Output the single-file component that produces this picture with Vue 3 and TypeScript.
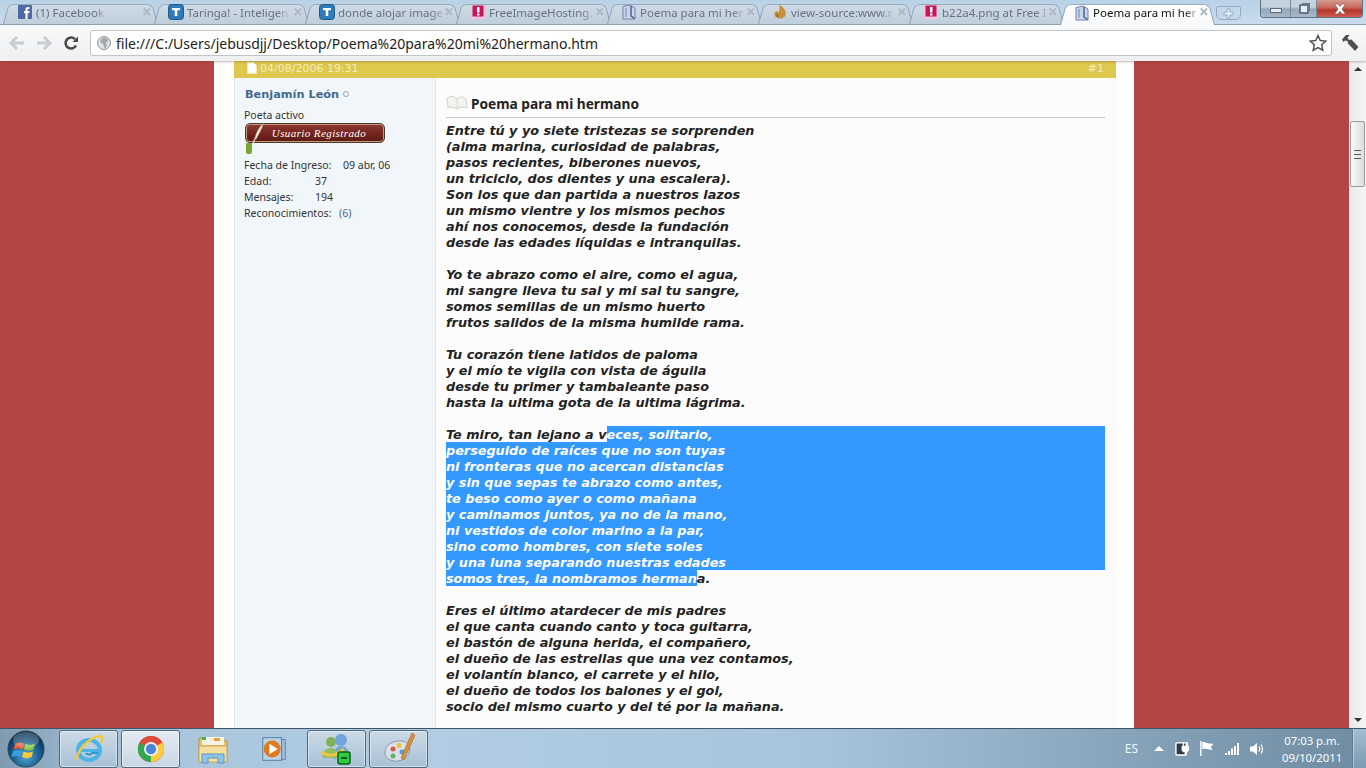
<template>
  <div class="screen">
    <!-- barra de pestañas y de direcciones -->
    <header class="chrome">
      <div class="tabstrip">
        <div
          v-for="tab in tabs"
          :key="tab.id"
          class="tab"
          :class="{ active: tab.active }"
        >
          <svg class="favicon" viewBox="0 0 16 16" width="16" height="16">
            <template v-if="tab.icon === 'fb'">
              <rect x="1" y="1" width="14" height="14" rx="1" fill="#4c69a5" />
              <path d="M8.5 15V9.2H7V7h1.5V5.500C8.5 3.800 9.5 3 11 3h1.500v2.100h-1c-.7 0-.9.3-.9.9V7h1.900l-.3 2.200h-1.600V15z" fill="#fff" />
            </template>
            <template v-else-if="tab.icon === 't'">
              <rect x="0.5" y="0.5" width="15" height="15" rx="3" fill="#2f7ab8" stroke="#1f5a8e" />
              <path d="M4 4h8v2.300H9.300V12H6.700V6.300H4z" fill="#fff" />
            </template>
            <template v-else-if="tab.icon === 'fih'">
              <rect x="1" y="1" width="14" height="14" fill="#f4c3dc" />
              <rect x="2.5" y="1.5" width="11" height="11" fill="#c2185b" />
              <rect x="7" y="3" width="2.5" height="5.5" fill="#fff" />
              <rect x="7" y="9.5" width="2.5" height="2" fill="#fff" />
            </template>
            <template v-else-if="tab.icon === 'doc'">
              <path d="M2 2.5 9 1l5 3v11H2z" fill="#c9d6ea" stroke="#6f83ad" />
              <path d="M10 2v10l3.5 2.500" fill="none" stroke="#3d5486" stroke-width="1.3" />
              <path d="M5 4v9" stroke="#8ea2c8" stroke-width="1.5" />
            </template>
            <template v-else>
              <path d="M7 1c5 2 7.500 6 6.500 10-.8 3-4.500 4.500-8 3C3 13 1.500 10 3 8c1-1.200 3-1 3.500.5C7.500 6 8 4 7 1z" fill="#c8903a" />
              <path d="M4.5 10c1 .2 1.500 1.500 1 3" stroke="#6a4a1c" fill="none" />
            </template>
          </svg>
          <span class="tab-title">{{ tab.title }}</span>
          <span class="tab-close">×</span>
        </div>
        <div class="newtab">
          <svg viewBox="0 0 12 12" width="11" height="11">
            <path d="M4.5 1h3v3.500H11v3H7.500V11h-3V7.500H1v-3h3.500z" fill="#e8f0f8" stroke="#8fa6bc" />
          </svg>
        </div>
        <div class="wincontrols">
          <div class="wc wc-min"><span class="min-glyph"></span></div>
          <div class="wc wc-max"><span class="max-glyph"></span></div>
          <div class="wc wc-close">
            <svg viewBox="0 0 14 12" width="14" height="12">
              <path d="M1.5 1H5l2 2.500L9 1h3.500L9 6l3.500 5H9L7 8.500 5 11H1.500L5 6z" fill="#fff" stroke="#7d2a22" stroke-width="0.5" />
            </svg>
          </div>
        </div>
      </div>
      <div class="toolbar">
        <svg class="nav nav-back" viewBox="0 0 18 16" width="18" height="16">
          <path d="M9 2 3 8l6 6M3.500 8H16" fill="none" stroke="#c9cdd1" stroke-width="3" />
        </svg>
        <svg class="nav nav-forward" viewBox="0 0 18 16" width="18" height="16">
          <path d="m9 2 6 6-6 6M14.500 8H2" fill="none" stroke="#c9cdd1" stroke-width="3" />
        </svg>
        <svg class="nav nav-reload" viewBox="0 0 16 16" width="16" height="16">
          <path d="M13 10.500A5.500 5.500 0 1 1 12 4.200" fill="none" stroke="#4a4a4a" stroke-width="2.6" />
          <path d="M9.5 7H15V1.500z" fill="#4a4a4a" />
        </svg>
        <div class="omnibox">
          <svg viewBox="0 0 16 16" width="16" height="16">
            <circle cx="8" cy="8" r="6.5" fill="#dfe2e6" stroke="#8f959b" />
            <path d="M8 2.500c2 1 3.500.5 4.500 2.500L10 8l1 3-2.500 2.500L7 9 4 7l1-3z" fill="#a3a9af" />
          </svg>
          <span class="url">file:///C:/Users/jebusdjj/Desktop/Poema%20para%20mi%20hermano.htm</span>
          <svg class="star" viewBox="0 0 18 18" width="18" height="18">
            <path d="m9 1.500 2.300 5 5.400.6-4 3.700 1.100 5.400L9 13.500l-4.800 2.700 1.100-5.400-4-3.700 5.400-.6z" fill="#fff" stroke="#555" stroke-width="1.5" />
          </svg>
        </div>
        <svg class="wrench" viewBox="0 0 18 18" width="18" height="18">
          <path d="M1 5.500 5 1h3.500L6.500 4l1.500 2 2.500-.5L17.500 13l-3.500 4-7-7.500-.5-2.500-2.500-.5L2.500 8z" fill="#4e4e4e" />
        </svg>
      </div>
    </header>

    <!-- página -->
    <main class="page">
      <div class="viewport">
        <div class="wrap">
          <article class="post">
            <div class="post-head">
              <span class="date">
                <svg viewBox="0 0 10 12" width="10" height="12">
                  <path d="M.5.5h6l3 3v8H.5z" fill="#fff" stroke="#f3e9b0" stroke-width="0.6" />
                </svg>
                04/08/2006 19:31
              </span>
              <span class="postnum">#1</span>
            </div>
            <div class="post-body">
              <aside class="user">
                <div class="username">Benjamín León <span class="status"></span></div>
                <div class="usertitle">Poeta activo</div>
                <div class="rank">
                  <svg class="quill" viewBox="0 0 14 22" width="14" height="22">
                    <path d="M12.5.5C9 3 5.500 8 3.500 16L5 16.500C8 11 11 6 12.500.5z" fill="#f4ecd8" stroke="#8a7d68" stroke-width="0.5" />
                    <path d="M3.5 16 2 21.500" stroke="#e9dfc8" stroke-width="1.2" />
                  </svg>
                  <span class="rank-label">Usuario Registrado</span>
                </div>
                <div class="repbar"></div>
                <dl class="stats">
                  <div v-for="stat in stats" :key="stat.label" class="stat">
                    <dt :style="{ width: stat.valueAt + 'px' }">{{ stat.label }}</dt>
                    <dd :class="{ link: stat.link }">{{ stat.value }}</dd>
                  </div>
                </dl>
              </aside>
              <section class="message">
                <h2 class="msg-title">
                  <svg viewBox="0 0 22 16" width="22" height="16">
                    <path d="M1 3c4-2 7-2 10 1 3-2.500 6-3 9 0v.5l1 8.500c-4-1.500-7-1-10 1-3-1.500-6-2.500-9-1.500z" fill="#f3f3ef" stroke="#c9c9c2" stroke-width="0.8" />
                    <path d="M11 4l.5 9.500" stroke="#c9c9c2" stroke-width="0.7" />
                  </svg>
                  Poema para mi hermano
                </h2>
                <div class="poem">
                  <div v-for="(line, i) in poemBefore" :key="'a' + i" class="line">{{ line }}</div>
                  <div class="line sel-first"><span>Te miro, tan lejano a v</span><span class="sel sel-rest">eces, solitario,</span></div>
                  <div v-for="line in poemSelected" :key="line" class="line sel">{{ line }}</div>
                  <div class="line"><span class="sel">somos tres, la nombramos herman</span>a.</div>
                  <div v-for="(line, i) in poemAfter" :key="'b' + i" class="line">{{ line }}</div>
                </div>
              </section>
            </div>
          </article>
        </div>
      </div>
      <div class="scrollbar">
        <span class="arrow-up"></span>
        <div class="thumb"><span class="grip"></span></div>
        <span class="arrow-down"></span>
      </div>
    </main>

    <!-- barra de tareas de Windows 7 -->
    <footer class="taskbar">
      <svg class="orb" viewBox="0 0 40 40" width="40" height="40">
        <defs>
          <radialGradient id="orbFill" cx="50%" cy="70%" r="65%">
            <stop offset="0" stop-color="#4fa8d8" />
            <stop offset="0.7" stop-color="#12507e" />
            <stop offset="1" stop-color="#0b2c48" />
          </radialGradient>
        </defs>
        <circle cx="20" cy="20" r="18" fill="url(#orbFill)" stroke="#2d4658" />
        <path d="M9 15c3-2 6-2 9-.5l-1.500 6c-3-1.500-6-1.500-9 0z" fill="#e8602c" />
        <path d="M19.5 14.800c3 1.500 6 1.500 9.500-.3l-1.500 6c-3 1.500-6 1.500-9.500 0z" fill="#8cc63f" />
        <path d="M7 22c3-1.500 6-1.500 9 0l-1.500 6c-3-1.500-6-1.500-9 0z" fill="#3d9be0" />
        <path d="M17.5 22.500c3 1.500 6 1.500 9.500 0L25.500 28c-3 1.500-6 1.500-9.500 0z" fill="#fdc92f" />
        <ellipse cx="20" cy="11" rx="13" ry="8" fill="#fff" opacity="0.22" />
      </svg>
      <div class="tb-btn">
        <svg viewBox="0 0 32 32" width="32" height="32">
          <ellipse cx="16" cy="17" rx="11" ry="10" fill="none" stroke="#4ab4e6" stroke-width="4" />
          <path d="M7 16h18v3H7z" fill="#4ab4e6" />
          <path d="M25 20h-6c-1 2-5 2-6 0" fill="none" stroke="#2f9ad0" stroke-width="2" />
          <path d="M3 27C5 17 15 5 27 3c3 0 3 3 1 7" fill="none" stroke="#f5c83a" stroke-width="2.5" />
        </svg>
      </div>
      <div class="tb-btn tb-active">
        <svg viewBox="0 0 32 32" width="30" height="30">
          <circle cx="16" cy="16" r="14" fill="#dd4b39" />
          <path d="M16 16 28.100 9A14 14 0 0 1 16 30z" fill="#ffcd40" />
          <path d="M16 16 16 30A14 14 0 0 1 3.900 9z" fill="#2fa84f" />
          <path d="M16 2A14 14 0 0 1 28.100 9H16L8 12 3.900 9A14 14 0 0 1 16 2z" fill="#dd4b39" />
          <circle cx="16" cy="16" r="6.5" fill="#4a86d8" stroke="#f2f2f2" stroke-width="2" />
        </svg>
      </div>
      <div class="tb-btn tb-plain">
        <svg viewBox="0 0 34 34" width="34" height="34">
          <path d="M3 6h16l2 3h10v20H3z" fill="#e9c46a" stroke="#b8924a" />
          <rect x="6" y="5" width="22" height="8" fill="#f7f3e2" />
          <rect x="6" y="5" width="4" height="3" fill="#4caf50" />
          <rect x="18" y="6" width="6" height="3" fill="#d9a441" />
          <path d="M3 14h28v16H3z" fill="#f6df9e" stroke="#c9a45a" />
          <path d="M6 22h22v9h-6v-5H12v5H6z" fill="#8cc4ea" stroke="#5e93bb" />
        </svg>
      </div>
      <div class="tb-btn tb-plain">
        <svg viewBox="0 0 34 34" width="32" height="32">
          <rect x="8" y="7" width="20" height="21" fill="#9dbcd6" stroke="#5f87aa" />
          <rect x="4" y="5" width="20" height="24" fill="#b9d2e6" stroke="#4f7ca3" />
          <circle cx="14" cy="17" r="9" fill="#e07a1f" />
          <path d="M11 11.500 20 17l-9 5.500z" fill="#fff" />
        </svg>
      </div>
      <div class="tb-btn">
        <svg viewBox="0 0 34 34" width="34" height="34">
          <circle cx="11" cy="10" r="5" fill="#7fb25a" />
          <circle cx="21" cy="8" r="6" fill="#6ea6dc" />
          <path d="M14 28c-1-9 2-14 7-14s8 4 8 9v3H16z" fill="#6ea6dc" />
          <path d="M3 26c-1-6 2-10 8-10s7 5 7 10z" fill="#8fbe68" />
          <path d="M2 20C8 25 16 24 24 17" fill="none" stroke="#f0c53c" stroke-width="3" />
          <rect x="18" y="20" width="12" height="12" rx="2" fill="#2ecc40" stroke="#0d5f18" stroke-width="1.5" />
          <rect x="21" y="25" width="6" height="2" fill="#0d5f18" />
        </svg>
      </div>
      <div class="tb-btn">
        <svg viewBox="0 0 34 34" width="34" height="34">
          <path d="M3 20C3 13 11 8 20 9c7 1 9 6 7 12-2 5-8 9-15 8-6-1-9-4-9-9z" fill="#d9e0ea" stroke="#8796ab" />
          <circle cx="11" cy="17" r="2.5" fill="#d9584a" />
          <circle cx="17" cy="13.500" r="2.5" fill="#e9c23e" />
          <circle cx="20" cy="20" r="2.5" fill="#5c9ad4" />
          <circle cx="11" cy="24" r="2.5" fill="#62b06a" />
          <path d="M30 1 19 26l3 2L33 3z" fill="#d9903a" stroke="#a0641f" stroke-width="0.6" />
        </svg>
      </div>
      <div class="tray">
        <span class="lang">ES</span>
        <span class="tray-arrow"></span>
        <svg viewBox="0 0 16 18" width="15" height="17">
          <rect x="1" y="3" width="11" height="13" rx="1" fill="#2b3b47" stroke="#fff" stroke-width="1.5" />
          <path d="M7 6h8v5l-2 2H9l-2-2z" fill="#fff" />
          <path d="M9 2v4M13 2v4M11 13v3" stroke="#fff" stroke-width="1.5" />
        </svg>
        <svg viewBox="0 0 16 18" width="16" height="17">
          <path d="M1.5 1v16" stroke="#fff" stroke-width="1.5" />
          <path d="M3 2c4 0 5 2 12 2l-3 3.500 2 3C9 10 7 8.500 3 9.500z" fill="#fff" />
        </svg>
        <svg viewBox="0 0 16 14" width="16" height="14">
          <path d="M1 11h2v2H1zM4 9h2v4H4zM7 6.500h2V13H7zM10 4h2v9h-2zM13 1h2v12h-2z" fill="#fff" />
        </svg>
        <svg viewBox="0 0 16 16" width="16" height="16">
          <path d="M1 5.500h3L8 2v12L4 10.500H1z" fill="#fff" />
          <path d="M10 5.500c1 1.500 1 3.500 0 5M12 3.500c2 2.500 2 6.500 0 9" fill="none" stroke="#fff" stroke-width="1.2" />
        </svg>
        <div class="clock">
          <div>07:03 p.m.</div>
          <div>09/10/2011</div>
        </div>
      </div>
      <div class="showdesk"></div>
    </footer>
  </div>
</template>

<script setup lang="ts">
interface Tab {
  id: number
  title: string
  icon: 'fb' | 't' | 'fih' | 'doc' | 'src'
  active?: boolean
}

interface Stat {
  label: string
  value: string
  valueAt: number
  link?: boolean
}

// títulos tal como se leen en la pestaña
const tabs: Tab[] = [
  { id: 1, title: '(1) Facebook', icon: 'fb' },
  { id: 2, title: 'Taringa! - Inteligen', icon: 't' },
  { id: 3, title: 'donde alojar image', icon: 't' },
  { id: 4, title: 'FreeImageHosting.', icon: 'fih' },
  { id: 5, title: 'Poema para mi her', icon: 'doc' },
  { id: 6, title: 'view-source:www.r', icon: 'src' },
  { id: 7, title: 'b22a4.png at Free I', icon: 'fih' },
  { id: 8, title: 'Poema para mi her', icon: 'doc', active: true }
]

// valueAt: distancia desde el borde izquierdo hasta el valor
const stats: Stat[] = [
  { label: 'Fecha de Ingreso:', value: '09 abr, 06', valueAt: 99 },
  { label: 'Edad:', value: '37', valueAt: 71 },
  { label: 'Mensajes:', value: '194', valueAt: 71 },
  { label: 'Reconocimientos:', value: '(6)', valueAt: 95, link: true }
]

const poemBefore: string[] = [
  'Entre tú y yo siete tristezas se sorprenden',
  '(alma marina, curiosidad de palabras,',
  'pasos recientes, biberones nuevos,',
  'un triciclo, dos dientes y una escalera).',
  'Son los que dan partida a nuestros lazos',
  'un mismo vientre y los mismos pechos',
  'ahí nos conocemos, desde la fundación',
  'desde las edades líquidas e intranquilas.',
  '',
  'Yo te abrazo como el aire, como el agua,',
  'mi sangre lleva tu sal y mi sal tu sangre,',
  'somos semillas de un mismo huerto',
  'frutos salidos de la misma humilde rama.',
  '',
  'Tu corazón tiene latidos de paloma',
  'y el mío te vigila con vista de águila',
  'desde tu primer y tambaleante paso',
  'hasta la ultima gota de la ultima lágrima.',
  ''
]

const poemSelected: string[] = [
  'perseguido de raíces que no son tuyas',
  'ni fronteras que no acercan distancias',
  'y sin que sepas te abrazo como antes,',
  'te beso como ayer o como mañana',
  'y caminamos juntos, ya no de la mano,',
  'ni vestidos de color marino a la par,',
  'sino como hombres, con siete soles',
  'y una luna separando nuestras edades'
]

const poemAfter: string[] = [
  '',
  'Eres el último atardecer de mis padres',
  'el que canta cuando canto y toca guitarra,',
  'el bastón de alguna herida, el compañero,',
  'el dueño de las estrellas que una vez contamos,',
  'el volantín blanco, el carrete y el hilo,',
  'el dueño de todos los balones y el gol,',
  'socio del mismo cuarto y del té por la mañana.'
]
</script>

<style>
html,
body {
  margin: 0;
  overflow: hidden;
}
</style>

<style scoped>
.screen {
  display: flex;
  flex-direction: column;
  width: 1366px;
  height: 768px;
  overflow: hidden;
  font-family: "Noto Sans", "DejaVu Sans", sans-serif;
}

/* ---- navegador ---- */
.chrome {
  position: relative;
  z-index: 2;
  flex: none;
  height: 61px;
  box-shadow: 0 1px 2px rgba(90, 60, 60, 0.35);
}

.tabstrip {
  display: flex;
  height: 25px;
  padding-left: 5px;
  background: linear-gradient(#b9d2e8, #c8dbec);
  box-sizing: border-box;
  border-bottom: 1px solid #8f9fad;
}

.tab {
  position: relative;
  display: flex;
  flex: none;
  align-items: center;
  gap: 3px;
  width: 151px;
  height: 24px;
  padding: 0 4px 0 12px;
  box-sizing: border-box;
  font-size: 11.5px;
  color: #66727c;
}

.tab::before {
  content: "";
  position: absolute;
  inset: 1px -2px 0 -2px;
  z-index: 0;
  background: linear-gradient(#cfdbe6, #bfcedb);
  border: 1px solid #8ea0b0;
  border-bottom: none;
  border-radius: 6px 6px 0 0;
  transform: perspective(100px) rotateX(20deg);
  transform-origin: bottom;
}

.tab.active {
  z-index: 1;
  height: 25px;
  color: #111;
}

.tab.active::before {
  background: linear-gradient(#fff, #f6f8fa);
}

.favicon,
.tab-title,
.tab-close {
  position: relative;
  z-index: 1;
  flex: none;
}

.tab-title {
  white-space: nowrap;
  -webkit-mask-image: linear-gradient(90deg, #000 88%, rgba(0, 0, 0, 0.25));
  mask-image: linear-gradient(90deg, #000 88%, rgba(0, 0, 0, 0.25));
}

.tab-close {
  position: absolute;
  left: 137px;
  top: 2px;
  font-size: 17px;
  line-height: 20px;
  font-weight: 700;
  color: #adb8c2;
}

.newtab {
  display: flex;
  flex: none;
  align-items: center;
  justify-content: center;
  width: 25px;
  height: 14px;
  margin: 6px 0 0 3px;
  background: #c3d8ea;
  border: 1px solid #97aabd;
  border-radius: 2px 2px 5px 5px;
  box-sizing: border-box;
}

.wincontrols {
  display: flex;
  flex: none;
  height: 17px;
  margin-left: 19px;
  border: 1px solid #5d6f80;
  border-top: none;
  border-radius: 0 0 4px 4px;
  overflow: hidden;
}

.wc {
  display: flex;
  align-items: center;
  justify-content: center;
  height: 100%;
  background: linear-gradient(#c4d2de 40%, #94a8b9 55%, #a9bac9);
  border-right: 1px solid #75879a;
  box-sizing: border-box;
}

.wc-min {
  width: 30px;
}

.wc-max {
  width: 26px;
}

.wc-close {
  width: 45px;
  border-right: none;
  background: linear-gradient(#d59a90, #c9665c 45%, #b5352a 60%, #cb5d4f);
}

.min-glyph {
  width: 10px;
  height: 3px;
  margin-top: 3px;
  background: #e8eef4;
  border: 1px solid #5a6b7a;
}

.max-glyph {
  width: 6px;
  height: 6px;
  background: #e8eef4;
  border: 2px solid #66798a;
  border-radius: 1px;
  box-shadow: 2px -2px 0 -1px #66798a;
}

.toolbar {
  display: flex;
  align-items: center;
  height: 36px;
  padding-left: 8px;
  background: linear-gradient(#f7f9fa, #eef0f2);
}

.nav {
  flex: none;
}

.nav-forward {
  margin-left: 9px;
}

.nav-reload {
  margin-left: 10px;
  margin-right: 11px;
}

.omnibox {
  display: flex;
  flex: none;
  align-items: center;
  width: 1242px;
  height: 26px;
  padding: 0 4px 0 5px;
  box-sizing: border-box;
  background: #fff;
  border: 1px solid #bfc4c8;
  border-radius: 3px;
}

.url {
  margin-left: 4px;
  font-size: 14px;
  color: #222;
  white-space: nowrap;
}

.star {
  margin-left: auto;
}

.wrench {
  flex: none;
  margin-left: 9px;
}

/* ---- página ---- */
.page {
  display: flex;
  flex: 1;
  min-height: 0;
}

.viewport {
  flex: 1;
  min-width: 0;
  overflow: hidden;
  background: #b54545;
}

.wrap {
  width: 920px;
  height: 100%;
  margin-left: 214px;
  padding: 0 18px 0 20px;
  box-sizing: border-box;
  background: #fffefd;
}

.post {
  height: 100%;
  display: flex;
  flex-direction: column;
}

.post-head {
  display: flex;
  flex: none;
  align-items: center;
  justify-content: space-between;
  height: 17px;
  padding: 0 12px 3px 13px;
  box-sizing: border-box;
  background: #dfc84e;
  font-family: "DejaVu Sans", sans-serif;
  font-size: 11px;
  color: #f4ecb8;
}

.date {
  display: flex;
  align-items: center;
  gap: 3px;
}

.post-body {
  display: flex;
  flex: 1;
  min-height: 0;
  background: #fcfcfc;
  border-left: 1px solid #e3e8ec;
}

.user {
  flex: none;
  width: 201px;
  padding: 8px 10px 0 9px;
  box-sizing: border-box;
  background: #f1f6fb;
  border-right: 1px solid #e3e8ec;
  font-size: 10.5px;
  color: #333;
}

.username {
  display: flex;
  align-items: center;
  gap: 4px;
  height: 16px;
  margin-left: 1px;
  font-family: "DejaVu Sans", sans-serif;
  font-size: 11.3px;
  font-weight: 700;
  color: #44688c;
}

.status {
  width: 4px;
  height: 4px;
  border: 1px solid #9aa5ae;
  border-radius: 50%;
}

.usertitle {
  margin-top: 5px;
  line-height: 16px;
  height: 16px;
}

.rank {
  position: relative;
  display: flex;
  align-items: center;
  justify-content: center;
  width: 140px;
  height: 20px;
  margin-left: 1px;
  padding-left: 8px;
  box-sizing: border-box;
  background: linear-gradient(#8c3a30, #74241e 55%, #5a1a14);
  border: 1px solid #4a3a2c;
  border-radius: 5px;
  box-shadow: inset 0 0 0 1px #c79a7c;
}

.quill {
  position: absolute;
  left: 5px;
  top: -1px;
}

.rank-label {
  font-family: "Liberation Serif", serif;
  font-style: italic;
  font-size: 11px;
  letter-spacing: 0.4px;
  color: #fff;
  white-space: nowrap;
}

.repbar {
  width: 6px;
  height: 11px;
  margin-left: 2px;
  background: #79a832;
  border-radius: 1px 1px 2px 2px;
}

.stats {
  margin: 3px 0 0;
}

.stat {
  display: flex;
  line-height: 16px;
  white-space: nowrap;
}

.stat dt {
  flex: none;
}

.stat dd {
  margin: 0;
}

.stat dd.link {
  color: #44688c;
}

.message {
  flex: 1;
  min-width: 0;
  padding: 0 11px 0 10px;
}

.msg-title {
  display: flex;
  align-items: center;
  gap: 3px;
  height: 40px;
  margin: 0;
  padding-top: 11px;
  box-sizing: border-box;
  border-bottom: 1px solid #c6c6c6;
  font-size: 13.7px;
  font-weight: 700;
  color: #222;
}

.poem {
  margin-top: 4px;
  font-family: "DejaVu Sans", sans-serif;
  font-size: 12.8px;
  font-style: italic;
  font-weight: 700;
  line-height: 18px;
  color: #222;
}

.line {
  height: 16px;
  white-space: pre;
}

.sel {
  background: #3399ff;
  color: #fff;
}

.sel-first {
  display: flex;
}

.sel-rest {
  flex: 1;
}

.line > .sel {
  display: inline-block;
  height: 16px;
  vertical-align: top;
}

/* ---- barra de desplazamiento ---- */
.scrollbar {
  position: relative;
  display: flex;
  flex: none;
  flex-direction: column;
  align-items: center;
  justify-content: space-between;
  width: 17px;
  background: linear-gradient(90deg, #e9e9e9, #f6f6f6);
  padding: 6px 0;
  box-sizing: border-box;
}

.arrow-up,
.arrow-down {
  width: 0;
  height: 0;
  border-left: 4px solid transparent;
  border-right: 4px solid transparent;
}

.arrow-up {
  border-bottom: 4px solid #333;
}

.arrow-down {
  border-top: 4px solid #333;
}

.thumb {
  position: absolute;
  top: 60px;
  left: 1px;
  display: flex;
  align-items: center;
  justify-content: center;
  width: 15px;
  height: 66px;
  box-sizing: border-box;
  background: linear-gradient(90deg, #f8f8f8, #dcdcdc);
  border: 1px solid #9c9c9c;
  border-radius: 2px;
}

.grip {
  width: 7px;
  height: 7px;
  border-top: 1px solid #555;
  border-bottom: 1px solid #555;
  background: linear-gradient(#555, #555) center / 100% 1px no-repeat;
}

/* ---- barra de tareas ---- */
.taskbar {
  display: flex;
  flex: none;
  align-items: center;
  height: 40px;
  box-sizing: border-box;
  padding-left: 6px;
  background: linear-gradient(90deg, #7f9bb2 0, #a6c3da 8%, #b2cde3 30%, #a7c4dc 60%, #84a0b7 85%, #6f8ca3);
  border-top: 1px solid #3f5364;
}

.orb {
  flex: none;
  margin-right: 13px;
}

.tb-btn {
  display: flex;
  flex: none;
  align-items: center;
  justify-content: center;
  width: 59px;
  height: 38px;
  margin-right: 3px;
  box-sizing: border-box;
  border: 1px solid #50687c;
  border-radius: 3px;
  background: linear-gradient(#cbdae6, #a9c1d5);
  box-shadow: inset 0 0 0 1px rgba(255, 255, 255, 0.45);
}

.tb-active {
  background: linear-gradient(#e3ebf2, #c8d7e4);
}

.tb-plain {
  border-color: transparent;
  background: none;
  box-shadow: none;
}

.tray {
  display: flex;
  align-items: center;
  gap: 9px;
  margin-left: auto;
  color: #fff;
}

.lang {
  margin-right: 7px;
  font-size: 12px;
  color: #eef4f8;
}

.tray-arrow {
  width: 0;
  height: 0;
  margin-right: 2px;
  border-left: 5px solid transparent;
  border-right: 5px solid transparent;
  border-bottom: 5px solid #fff;
}

.clock {
  width: 60px;
  margin: 0 10px 0 8px;
  font-size: 11.3px;
  line-height: 17px;
  text-align: center;
  white-space: nowrap;
}

.showdesk {
  flex: none;
  width: 14px;
  height: 39px;
  background: linear-gradient(#a3bccf, #7d9ab1);
  border-left: 1px solid #5f7a90;
  box-sizing: border-box;
  box-shadow: inset 1px 0 0 rgba(255, 255, 255, 0.4);
}
</style>
